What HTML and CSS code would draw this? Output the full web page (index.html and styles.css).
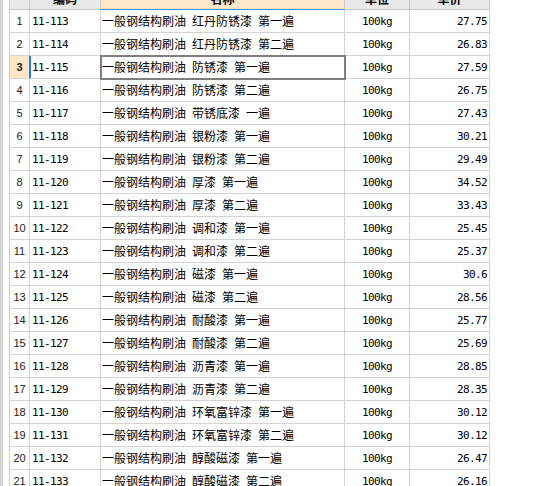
FILE: index.html
```html
<!DOCTYPE html>
<html>
<head>
<meta charset="utf-8">
<link rel="stylesheet" href="styles.css">
</head>
<body>
<div class="side"><div class="bar"></div></div>
<div class="sheet">
  <div class="row head">
    <div class="c num"></div>
    <div class="c code">编码</div>
    <div class="c name sel-col">名称</div>
    <div class="c unit">单位</div>
    <div class="c price">单价</div>
  </div>
  <div class="row"><div class="c num">1</div><div class="c code">11-113</div><div class="c name">一般钢结构刷油 红丹防锈漆 第一遍</div><div class="c unit">100kg</div><div class="c price">27.75</div></div>
  <div class="row"><div class="c num">2</div><div class="c code">11-114</div><div class="c name">一般钢结构刷油 红丹防锈漆 第二遍</div><div class="c unit">100kg</div><div class="c price">26.83</div></div>
  <div class="row cur"><div class="c num">3</div><div class="c code">11-115</div><div class="c name">一般钢结构刷油 防锈漆 第一遍</div><div class="c unit">100kg</div><div class="c price">27.59</div></div>
  <div class="row"><div class="c num">4</div><div class="c code">11-116</div><div class="c name">一般钢结构刷油 防锈漆 第二遍</div><div class="c unit">100kg</div><div class="c price">26.75</div></div>
  <div class="row"><div class="c num">5</div><div class="c code">11-117</div><div class="c name">一般钢结构刷油 带锈底漆 一遍</div><div class="c unit">100kg</div><div class="c price">27.43</div></div>
  <div class="row"><div class="c num">6</div><div class="c code">11-118</div><div class="c name">一般钢结构刷油 银粉漆 第一遍</div><div class="c unit">100kg</div><div class="c price">30.21</div></div>
  <div class="row"><div class="c num">7</div><div class="c code">11-119</div><div class="c name">一般钢结构刷油 银粉漆 第二遍</div><div class="c unit">100kg</div><div class="c price">29.49</div></div>
  <div class="row"><div class="c num">8</div><div class="c code">11-120</div><div class="c name">一般钢结构刷油 厚漆 第一遍</div><div class="c unit">100kg</div><div class="c price">34.52</div></div>
  <div class="row"><div class="c num">9</div><div class="c code">11-121</div><div class="c name">一般钢结构刷油 厚漆 第二遍</div><div class="c unit">100kg</div><div class="c price">33.43</div></div>
  <div class="row"><div class="c num">10</div><div class="c code">11-122</div><div class="c name">一般钢结构刷油 调和漆 第一遍</div><div class="c unit">100kg</div><div class="c price">25.45</div></div>
  <div class="row"><div class="c num">11</div><div class="c code">11-123</div><div class="c name">一般钢结构刷油 调和漆 第二遍</div><div class="c unit">100kg</div><div class="c price">25.37</div></div>
  <div class="row"><div class="c num">12</div><div class="c code">11-124</div><div class="c name">一般钢结构刷油 磁漆 第一遍</div><div class="c unit">100kg</div><div class="c price">30.6</div></div>
  <div class="row"><div class="c num">13</div><div class="c code">11-125</div><div class="c name">一般钢结构刷油 磁漆 第二遍</div><div class="c unit">100kg</div><div class="c price">28.56</div></div>
  <div class="row"><div class="c num">14</div><div class="c code">11-126</div><div class="c name">一般钢结构刷油 耐酸漆 第一遍</div><div class="c unit">100kg</div><div class="c price">25.77</div></div>
  <div class="row"><div class="c num">15</div><div class="c code">11-127</div><div class="c name">一般钢结构刷油 耐酸漆 第二遍</div><div class="c unit">100kg</div><div class="c price">25.69</div></div>
  <div class="row"><div class="c num">16</div><div class="c code">11-128</div><div class="c name">一般钢结构刷油 沥青漆 第一遍</div><div class="c unit">100kg</div><div class="c price">28.85</div></div>
  <div class="row"><div class="c num">17</div><div class="c code">11-129</div><div class="c name">一般钢结构刷油 沥青漆 第二遍</div><div class="c unit">100kg</div><div class="c price">28.35</div></div>
  <div class="row"><div class="c num">18</div><div class="c code">11-130</div><div class="c name">一般钢结构刷油 环氧富锌漆 第一遍</div><div class="c unit">100kg</div><div class="c price">30.12</div></div>
  <div class="row"><div class="c num">19</div><div class="c code">11-131</div><div class="c name">一般钢结构刷油 环氧富锌漆 第二遍</div><div class="c unit">100kg</div><div class="c price">30.12</div></div>
  <div class="row"><div class="c num">20</div><div class="c code">11-132</div><div class="c name">一般钢结构刷油 醇酸磁漆 第一遍</div><div class="c unit">100kg</div><div class="c price">26.47</div></div>
  <div class="row"><div class="c num">21</div><div class="c code">11-133</div><div class="c name">一般钢结构刷油 醇酸磁漆 第二遍</div><div class="c unit">100kg</div><div class="c price">26.16</div></div>
</div>
</body>
</html>
```
FILE: styles.css
```css
html, body {
  margin: 0;
  padding: 0;
  background: #ffffff;
  overflow: hidden;
}
body {
  display: flex;
  align-items: flex-start;
  height: 486px;
}
.side {
  width: 9px;
  height: 486px;
  flex: none;
}
.bar {
  width: 3px;
  height: 486px;
  background: #d6d6d6;
}
.sheet {
  margin-top: -13px;
  border-left: 1px solid #d0d0d0;
  flex: none;
}
.row {
  display: grid;
  grid-template-columns: 20px 71px 244px 65px 80px;
  height: 23px;
}
.c {
  box-sizing: border-box;
  border-right: 1px solid #d4d4d4;
  border-bottom: 1px solid #d4d4d4;
  display: flex;
  align-items: center;
  white-space: nowrap;
  overflow: hidden;
  color: #000;
}
.num {
  justify-content: center;
  font-family: "Liberation Sans", Arial, sans-serif;
  font-size: 11px;
  color: #222;
}
.code, .unit, .price {
  font-family: "DejaVu Sans Mono", "Noto Sans CJK SC", monospace;
  font-size: 11px;
  letter-spacing: -0.62px;
}
.code {
  padding-left: 2px;
}
.name {
  padding-left: 1px;
  font-family: "Liberation Mono", "Noto Sans CJK SC", monospace;
  font-size: 12px;
  word-spacing: -1.2px;
}
.unit {
  justify-content: center;
}
.price {
  justify-content: flex-end;
  padding-right: 2px;
}
.head .c {
  background: #e9e9e9;
  border-color: #c9c9c9;
  justify-content: center;
  font-family: "Noto Sans CJK SC", sans-serif;
  font-weight: bold;
  font-size: 12px;
  letter-spacing: 0;
  padding: 0;
}
.head .sel-col {
  background: #ffe6c8;
  border-bottom-color: #3d8de8;
}
.cur .num {
  background: #ffe6c8;
  font-weight: bold;
  border-right-color: #1e7cf0;
}
.cur .code {
  box-shadow: inset 1px 0 0 #1e7cf0;
}
.cur .name {
  outline: 2px solid #7f7f7f;
  outline-offset: -1px;
  position: relative;
  z-index: 1;
}
```
